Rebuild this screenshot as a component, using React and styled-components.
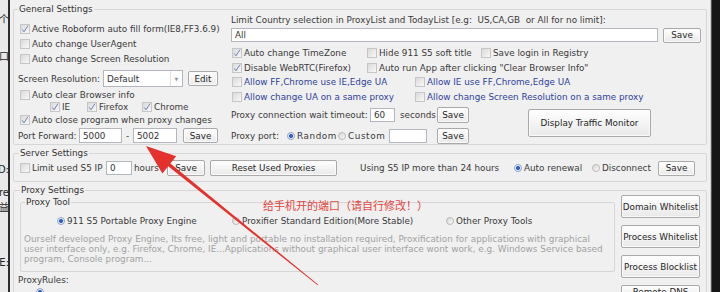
import React from "react";
import styled, { createGlobalStyle } from "styled-components";

const GlobalStyle = createGlobalStyle`
  html, body { margin: 0; padding: 0; }
  body {
    width: 720px;
    height: 292px;
    overflow: hidden;
    background: #141414;
    font-family: "DejaVu Sans", Verdana, sans-serif;
    font-size: 8.8px;
    color: #3a3a3a;
  }
  * { box-sizing: border-box; }
`;

const Frame = styled.div`
  position: relative;
  display: flex;
  width: 720px;
  height: 292px;
  overflow: hidden;
`;

const SideStrip = styled.div`
  width: 10px;
  flex-shrink: 0;
  background: #e9e9e9;
  border-right: 2px solid #2c2c2c;
  display: flex;
  flex-direction: column;
  align-items: flex-end;
  overflow: hidden;
  font-family: "DejaVu Sans", "Noto Sans CJK SC", sans-serif;
  font-size: 10px;
  color: #222;
`;

const StripText = styled.span`
  margin-top: ${(p) => p.$mt}px;
  margin-right: -1px;
  line-height: 12px;
  white-space: nowrap;
`;

const Main = styled.div`
  flex: 1;
  min-width: 0;
  background: #f0f0f0;
  padding: 4px 3px 0 3px;
  display: flex;
  flex-direction: column;
  overflow: hidden;
  border-right: 1px solid #cfcfcf;
`;

const RightEdge = styled.div`
  width: 9px;
  flex-shrink: 0;
  background: #161616;
  border-left: 1px solid #555;
`;

const Group = styled.fieldset`
  margin: ${(p) => p.$mt || 0}px 0 0 0;
  padding: ${(p) => p.$pt || 0}px ${(p) => p.$pr ?? 5}px ${(p) => p.$pb || 0}px
    ${(p) => p.$pl ?? 5}px;
  border: 1px solid #d6d6d6;
  border-radius: 2px;
  min-width: 0;
  flex-shrink: 0;
`;

const Legend = styled.legend`
  padding: 0 1px;
  font-size: 8.8px;
  line-height: 10px;
  color: #333;
`;

const Columns = styled.div`
  display: flex;
`;

const Col = styled.div`
  display: flex;
  flex-direction: column;
  width: ${(p) => (p.$w ? `${p.$w}px` : "auto")};
  flex: ${(p) => (p.$w ? "none" : 1)};
  min-width: 0;
`;

const Row = styled.div`
  display: flex;
  align-items: center;
  height: ${(p) => p.$h || 14}px;
  margin-top: ${(p) => p.$mt || 0}px;
  padding-left: ${(p) => p.$pl || 0}px;
  white-space: nowrap;
  flex-shrink: 0;
`;

const Text = styled.span`
  width: ${(p) => (p.$w ? `${p.$w}px` : "auto")};
  margin-left: ${(p) => p.$ml || 0}px;
  flex-shrink: 0;
  white-space: pre;
  text-align: ${(p) => p.$align || "left"};
`;

const CheckLabel = styled.label`
  display: flex;
  align-items: center;
  width: ${(p) => (p.$w ? `${p.$w}px` : "auto")};
  margin-left: ${(p) => p.$ml || 0}px;
  flex-shrink: 0;
  color: ${(p) => (p.$blue ? "#2f3f9c" : "#3a3a3a")};
  letter-spacing: ${(p) => p.$ls || 0}px;
`;

const Box = styled.span`
  width: 10px;
  height: 10px;
  flex-shrink: 0;
  margin-right: 2px;
  border: 1px solid #c6c6c6;
  background: linear-gradient(135deg, #dadada, #f8f8f8);
  display: inline-flex;
  align-items: center;
  justify-content: center;
`;

const Dot = styled.span`
  width: 8px;
  height: 8px;
  flex-shrink: 0;
  margin-right: 2px;
  border-radius: 50%;
  border: 1px solid ${(p) => (p.$on ? "#8ea2c8" : "#b8b8b8")};
  background: ${(p) =>
    p.$on
      ? "radial-gradient(circle, #2f62c4 0 1.7px, #e9eef8 2.3px)"
      : "linear-gradient(135deg, #d6d6d6, #fbfbfb)"};
`;

const Field = styled.input`
  width: ${(p) => (p.$w ? `${p.$w}px` : "auto")};
  flex: ${(p) => (p.$w ? "none" : 1)};
  min-width: 0;
  height: ${(p) => p.$h || 14}px;
  margin: 0 0 0 ${(p) => p.$ml || 0}px;
  padding: 0 3px;
  border: 1px solid #b3b6bc;
  background: #fff;
  font: inherit;
  color: #333;
  outline: none;
`;

const Select = styled.div`
  width: ${(p) => p.$w}px;
  height: 17px;
  flex-shrink: 0;
  display: flex;
  align-items: center;
  border: 1px solid #b3b6bc;
  background: #fff;
  padding-left: 3px;
  color: #333;
`;

const SelectValue = styled.span`
  flex: 1;
`;

const SelectArrow = styled.span`
  width: 12px;
  height: 15px;
  border-left: 1px solid #e2e2e2;
  display: flex;
  align-items: center;
  justify-content: center;
  color: #9a9a9a;
  font-size: 5px;
`;

const Button = styled.button`
  width: ${(p) => p.$w}px;
  height: ${(p) => p.$h || 15}px;
  margin: ${(p) => p.$mt || 0}px 0 0 ${(p) => p.$ml || 0}px;
  padding: 0;
  flex-shrink: 0;
  font: inherit;
  color: #262626;
  border: 1px solid #a9a9a9;
  border-radius: 2px;
  background: linear-gradient(#ffffff, #e9e9e9);
  box-shadow: inset 0 0 0 1px #fbfbfb;
  white-space: nowrap;
`;

const Description = styled.p`
  margin: 7px 0 0 -1px;
  font-size: 8.9px;
  line-height: 10px;
  color: #a2a2a2;
  white-space: nowrap;
`;

const SideButtons = styled.div`
  width: 79px;
  margin-left: 6px;
  display: flex;
  flex-direction: column;
  gap: 7px;
  flex-shrink: 0;
`;

const Overlay = styled.svg`
  position: absolute;
  left: 0;
  top: 0;
  pointer-events: none;
`;

const Note = styled.div`
  position: absolute;
  left: 263px;
  top: 197px;
  font-family: "Noto Sans CJK SC", sans-serif;
  font-size: 11px;
  line-height: 16px;
  color: #e2443e;
  white-space: nowrap;
`;

const Check = ({ on, blue, w, ml, children }) => (
  <CheckLabel $w={w} $ml={ml} $blue={blue}>
    <Box>
      {on && (
        <svg width="8" height="8" viewBox="0 0 8 8">
          <path d="M1.2 4.4 L3 6.8 L7 0.6" fill="none" stroke="#6f82b8" strokeWidth="1" />
        </svg>
      )}
    </Box>
    {children}
  </CheckLabel>
);

const Radio = ({ on, w, ml, ls, children }) => (
  <CheckLabel $w={w} $ml={ml} $ls={ls}>
    <Dot $on={on} />
    {children}
  </CheckLabel>
);

export default function App() {
  return (
    <Frame>
      <GlobalStyle />
      <SideStrip>
        <StripText $mt={14}>个</StripText>
        <StripText $mt={25}>口</StripText>
        <StripText $mt={101}>D:</StripText>
        <StripText $mt={11}>re</StripText>
        <StripText $mt={3}>益</StripText>
        <StripText $mt={43}>E:</StripText>
      </SideStrip>

      <Main>
        <Group $pt={1} $pl={4} $pr={5}>
          <Legend>General Settings</Legend>
          <Columns>
            <Col $w={213}>
              <Row $mt={6} $h={15} $pl={2}>
                <Check on>Active Roboform auto fill form(IE8,FF3.6.9)</Check>
              </Row>
              <Row $h={15} $pl={2}>
                <Check>Auto change UserAgent</Check>
              </Row>
              <Row $h={15} $pl={2}>
                <Check>Auto change Screen Resolution</Check>
              </Row>
              <Row $mt={4} $h={17}>
                <Text $w={85}>Screen Resolution:</Text>
                <Select $w={80}>
                  <SelectValue>Default</SelectValue>
                  <SelectArrow>▼</SelectArrow>
                </Select>
                <Button $w={30} $ml={5}>Edit</Button>
              </Row>
              <Row $mt={2} $h={12} $pl={2}>
                <Check>Auto clear Browser info</Check>
              </Row>
              <Row $h={12} $pl={32}>
                <Check on w={37}>IE</Check>
                <Check on w={55}>Firefox</Check>
                <Check on>Chrome</Check>
              </Row>
              <Row $h={14} $pl={2}>
                <Check on>Auto close program when proxy changes</Check>
              </Row>
              <Row $mt={1} $h={15}>
                <Text $w={61}>Port Forward:</Text>
                <Field $w={43} $h={15} defaultValue="5000" readOnly />
                <Text $w={11} $align="center">-</Text>
                <Field $w={44} $h={15} defaultValue="5002" readOnly />
                <Button $w={35} $ml={6}>Save</Button>
              </Row>
            </Col>

            <Col>
              <Row $h={10}>
                <Text>Limit Country selection in ProxyList and TodayList [e.g:  US,CA,GB  or All for no limit]:</Text>
              </Row>
              <Row $mt={3} $h={14}>
                <Field defaultValue="All" readOnly />
                <Button $w={38} $ml={5} $h={15}>Save</Button>
              </Row>
              <Row $mt={4} $h={14.5} $pl={1}>
                <Check on w={135}>Auto change TimeZone</Check>
                <Check w={114}>Hide 911 S5 soft title</Check>
                <Check>Save login in Registry</Check>
              </Row>
              <Row $h={14.5} $pl={1}>
                <Check on w={135}>Disable WebRTC(Firefox)</Check>
                <Check>Auto run App after clicking "Clear Browser Info"</Check>
              </Row>
              <Row $h={14.5} $pl={1}>
                <Check blue w={183}>Allow FF,Chrome use IE,Edge UA</Check>
                <Check blue>Allow IE use FF,Chrome,Edge UA</Check>
              </Row>
              <Row $h={14.5} $pl={1}>
                <Check blue w={183}>Allow change UA on a same proxy</Check>
                <Check blue>Allow change Screen Resolution on a same proxy</Check>
              </Row>
              <Columns>
                <Col $w={297}>
                  <Row $mt={3} $h={16}>
                    <Text $w={139}>Proxy connection wait timeout:</Text>
                    <Field $w={25} defaultValue="60" readOnly />
                    <Text $w={37} $ml={5}>seconds</Text>
                    <Button $w={32} $h={16}>Save</Button>
                  </Row>
                  <Row $mt={5} $h={16}>
                    <Text $w={56}>Proxy port:</Text>
                    <Radio on w={51} ls={0.6}>Random</Radio>
                    <Radio w={51} ls={0.6}>Custom</Radio>
                    <Field $w={38} readOnly />
                    <Button $w={32} $ml={10} $h={16}>Save</Button>
                  </Row>
                </Col>
                <Button $w={123} $h={28} $mt={5}>Display Traffic Monitor</Button>
              </Columns>
            </Col>
          </Columns>
        </Group>

        <Group $mt={3} $pt={2} $pb={5} $pl={5}>
          <Legend>Server Settings</Legend>
          <Row $h={16} $pl={1}>
            <Check w={86}>Limit used S5 IP</Check>
            <Field $w={26} defaultValue="0" readOnly />
            <Text $w={33} $ml={2}>hours</Text>
            <Button $w={38} $h={16}>Save</Button>
            <Button $w={127} $h={16} $ml={5}>Reset Used Proxies</Button>
            <Text $w={154} $ml={23}>Using S5 IP more than 24 hours</Text>
            <Radio on w={78}>Auto renewal</Radio>
            <Radio w={66}>Disconnect</Radio>
            <Button $w={37} $h={15}>Save</Button>
          </Row>
        </Group>

        <Group $mt={3} $pl={6} $pr={6} $pb={0}>
          <Legend>Proxy Settings</Legend>
          <Columns>
            <Col>
              <Group $mt={2} $pl={4} $pr={4} $pb={7}>
                <Legend>Proxy Tool</Legend>
                <Row $mt={8} $h={12} $pl={32}>
                  <Radio on w={175}>911 S5 Portable Proxy Engine</Radio>
                  <Radio w={214}>Proxifier Standard Edition(More Stable)</Radio>
                  <Radio>Other Proxy Tools</Radio>
                </Row>
                <Description>
                  Ourself developed Proxy Engine, Its free, light and portable no installation required, Proxification for applications with graphical
                  <br />
                  user interface only, e.g. Firefox, Chrome, IE...Applications without graphical user interface wont work, e.g. Windows Service based
                  <br />
                  program, Console program...
                </Description>
              </Group>
              <Row $mt={3} $h={10}>
                <Text $ml={-2}>ProxyRules:</Text>
              </Row>
              <Row $mt={2} $h={10} $pl={16}>
                <Radio on />
              </Row>
            </Col>
            <SideButtons>
              <Button $w={79} $h={23}>Domain Whitelist</Button>
              <Button $w={79} $h={23}>Process Whitelist</Button>
              <Button $w={79} $h={23}>Process Blocklist</Button>
              <Button $w={79} $h={13}>Remote DNS</Button>
            </SideButtons>
          </Columns>
        </Group>
      </Main>

      <RightEdge />

      <Note>给手机开的端口（请自行修改！）</Note>
      <Overlay width="720" height="292" viewBox="0 0 720 292">
        <polygon
          points="146,146 176.2,156.3 170.4,163.5 318.3,284.7 317.7,285.3 168.2,166.3 162.4,173.5"
          fill="#e5312d"
        />
      </Overlay>
    </Frame>
  );
}
